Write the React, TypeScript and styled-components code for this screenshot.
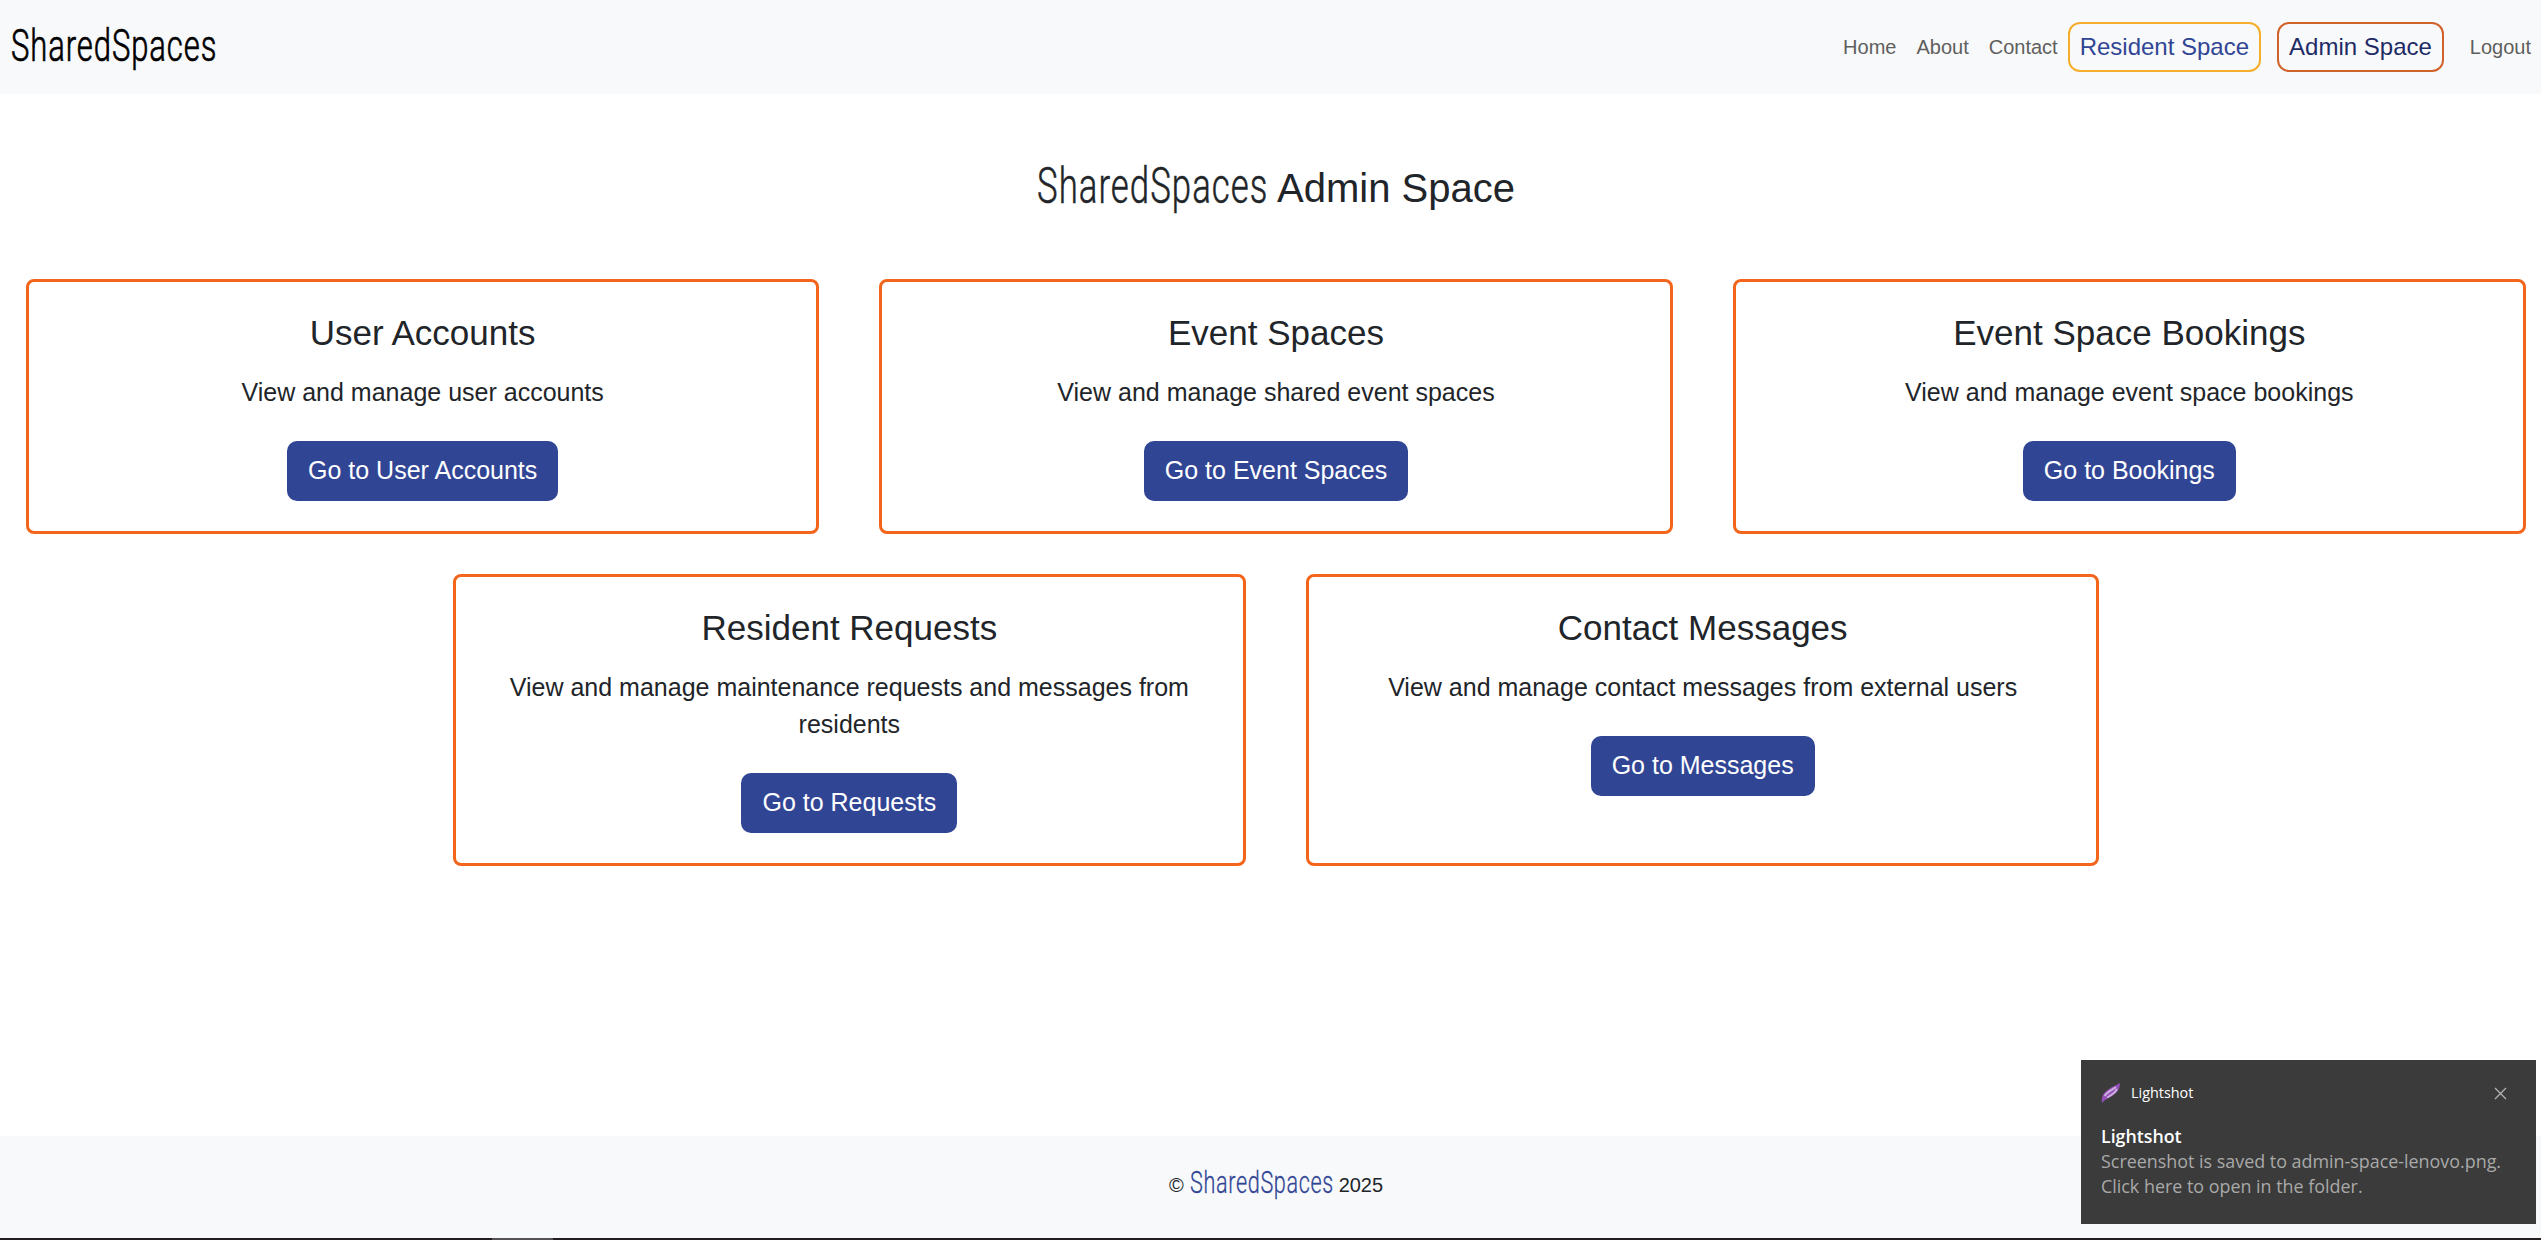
import React from "react";
import styled, { createGlobalStyle } from "styled-components";

const Global = createGlobalStyle`
  * { box-sizing: border-box; }
  html, body { margin: 0; height: 1240px; overflow: hidden; background: #fff; }
  body { font-family: "Liberation Sans", Arial, sans-serif; font-size: 20px; line-height: 1.5; color: #212529; }
  h2, h3, p { margin: 0; font-weight: 400; }
`;

const Page = styled.div`
  width: 2560px;
  height: 1240px;
  margin-left: -4px;
  display: flex;
  flex-direction: column;
`;

const NavBar = styled.header`
  height: 94px;
  flex: none;
  padding: 0 15px 0 15px;
  background: #f8f9fb;
  display: flex;
  align-items: center;
  justify-content: space-between;
`;

const WordmarkBox = styled.span<{ $w: number; $h: number; $lift: number }>`
  display: inline-flex;
  width: ${(p) => p.$w}px;
  height: ${(p) => p.$h + p.$lift * 2}px;
  padding-bottom: ${(p) => p.$lift * 2}px;
  align-items: center;
`;

const WordmarkText = styled.span<{ $size: number; $color: string; $scale: number; $stroke: number }>`
  font-family: Roboto, sans-serif;
  font-weight: 300;
  font-size: ${(p) => p.$size}px;
  line-height: 1;
  letter-spacing: 0.03em;
  color: ${(p) => p.$color};
  -webkit-text-stroke: ${(p) => p.$stroke}px ${(p) => p.$color};
  white-space: nowrap;
  transform: scaleX(${(p) => p.$scale});
  transform-origin: 0 50%;
`;

type WordmarkProps = { width: number; size: number; color: string; lift: number; stroke: number };

const Wordmark = ({ width, size, color, lift, stroke }: WordmarkProps) => (
  <WordmarkBox $w={width} $h={size} $lift={lift}>
    <WordmarkText $size={size} $color={color} $scale={width / (size * 6.62)} $stroke={stroke}>
      SharedSpaces
    </WordmarkText>
  </WordmarkBox>
);

const Links = styled.nav`
  display: flex;
  align-items: center;
`;

const NavLink = styled.a`
  padding: 0 10px;
  color: #5f5f5d;
`;

const SpaceLink = styled.a<{ $border: string; $color: string }>`
  height: 50px;
  display: flex;
  align-items: center;
  padding: 0 10px;
  margin-right: 16px;
  border: 2px solid ${(p) => p.$border};
  border-radius: 12px;
  font-size: 24px;
  color: ${(p) => p.$color};
`;

const Main = styled.main`
  flex: 1;
`;

const Title = styled.h2`
  height: 185px;
  padding-top: 3px;
  display: flex;
  align-items: center;
  justify-content: center;
  gap: 10px;
  font-size: 40px;
`;

const Row = styled.section`
  display: flex;
  justify-content: center;
  margin-bottom: 40px;
`;

const Column = styled.div`
  width: 853.33px;
  padding: 0 30px;
  display: flex;
`;

const Card = styled.article`
  flex: 1;
  padding: 30px 45px 30px;
  border: 3px solid #f4651c;
  border-radius: 8px;
  text-align: center;
`;

const CardTitle = styled.h3`
  font-size: 35px;
  line-height: 42px;
  margin-bottom: 20px;
`;

const CardText = styled.p`
  font-size: 25px;
  line-height: 37.4px;
  margin-bottom: 29.6px;
`;

const Button = styled.button`
  display: block;
  margin: 0 auto;
  height: 59.8px;
  padding: 0 21px 0.6px;
  border: 0;
  border-radius: 10px;
  background: #314595;
  color: #fff;
  font: 25px "Liberation Sans", Arial, sans-serif;
`;

const Footer = styled.footer`
  height: 102px;
  flex: none;
  padding-bottom: 4px;
  background: #f8f9fb;
  display: flex;
  align-items: center;
  justify-content: center;
  gap: 6px;
`;

const Taskbar = styled.div`
  height: 2px;
  flex: none;
  background: #231f20;
  padding-left: 496px;
`;

const TaskbarItem = styled.div`
  width: 61px;
  height: 2px;
  background: #555354;
`;

const Toast = styled.aside`
  position: absolute;
  left: 2081px;
  top: 1060px;
  width: 455px;
  height: 164px;
  padding: 22px 20px;
  background: #3b3b3b;
  font-family: "Open Sans", "Noto Sans", sans-serif;
  color: #fff;
`;

const ToastHead = styled.div`
  display: flex;
  align-items: center;
  height: 22px;
  font-size: 14.4px;
  gap: 10px;
  margin-bottom: 20px;
`;

const CloseIcon = styled.svg`
  margin-left: auto;
  margin-right: 9px;
`;

const ToastTitle = styled.p`
  font-size: 17.8px;
  line-height: 25px;
  font-weight: 600;
`;

const ToastText = styled.p`
  font-size: 17.9px;
  line-height: 25px;
  color: #a9a9a9;
  white-space: nowrap;
`;

const firstRow = [
  { title: "User Accounts", text: "View and manage user accounts", action: "Go to User Accounts" },
  { title: "Event Spaces", text: "View and manage shared event spaces", action: "Go to Event Spaces" },
  { title: "Event Space Bookings", text: "View and manage event space bookings", action: "Go to Bookings" },
];

const secondRow = [
  {
    title: "Resident Requests",
    text: "View and manage maintenance requests and messages from residents",
    action: "Go to Requests",
  },
  { title: "Contact Messages", text: "View and manage contact messages from external users", action: "Go to Messages" },
];

const CardRow = ({ items }: { items: typeof firstRow }) => (
  <Row>
    {items.map((c) => (
      <Column key={c.title}>
        <Card>
          <CardTitle>{c.title}</CardTitle>
          <CardText>{c.text}</CardText>
          <Button>{c.action}</Button>
        </Card>
      </Column>
    ))}
  </Row>
);

export default function App() {
  return (
    <>
      <Global />
      <Page>
        <NavBar>
          <Wordmark width={205} size={44} color="#000" lift={1.5} stroke={0.7} />
          <Links>
            <NavLink>Home</NavLink>
            <NavLink>About</NavLink>
            <NavLink>Contact</NavLink>
            <SpaceLink $border="#f6ad2b" $color="#314595">Resident Space</SpaceLink>
            <SpaceLink $border="#d0622a" $color="#1f2b66">Admin Space</SpaceLink>
            <NavLink>Logout</NavLink>
          </Links>
        </NavBar>
        <Main>
          <Title>
            <Wordmark width={230} size={50} color="#212529" lift={2.5} stroke={0.5} />
            <span>Admin Space</span>
          </Title>
          <CardRow items={firstRow} />
          <CardRow items={secondRow} />
        </Main>
        <Footer>
          <span>©</span>
          <Wordmark width={143} size={31} color="#314595" lift={3} stroke={0.3} />
          <span>2025</span>
        </Footer>
        <Taskbar>
          <TaskbarItem />
        </Taskbar>
      </Page>
      <Toast>
        <ToastHead>
          <svg width="20" height="22" viewBox="0 0 20 22">
            <path d="M1 21C0 14 3 10 8 7C12 4 16 3 19 1C19 7 16 11 11 14C7 17 4 17 1 21Z" fill="#9350b8" />
            <path d="M3.5 14C6 10 11 8 15 5M6 15.5C10 13.5 14 11 16 7" stroke="#cdb0de" strokeWidth="1.8" fill="none" />
          </svg>
          <span>Lightshot</span>
          <CloseIcon width="13" height="13" viewBox="0 0 13 13">
            <path d="M1 1L12 12M12 1L1 12" stroke="#b5b5b5" strokeWidth="1.2" />
          </CloseIcon>
        </ToastHead>
        <ToastTitle>Lightshot</ToastTitle>
        <ToastText>Screenshot is saved to admin-space-lenovo.png.</ToastText>
        <ToastText>Click here to open in the folder.</ToastText>
      </Toast>
    </>
  );
}
